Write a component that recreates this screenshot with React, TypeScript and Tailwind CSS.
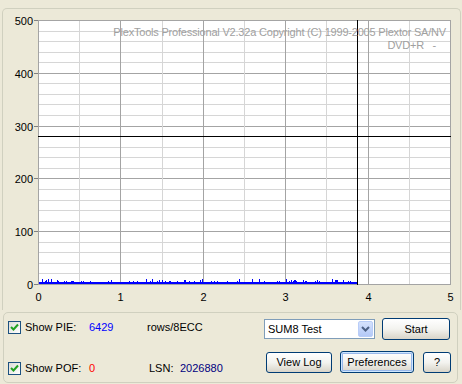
import React from 'react';

const font = { fontFamily: '"Liberation Sans", Arial, sans-serif' };

// chart geometry (page coordinates)
const left = 38;
const right = 450;
const top = 20;
const bottom = 284;
const xAt = (v: number) => Math.round(left + v * 82.4) + 0.5;
const yAt = (v: number) => Math.round(bottom - v * 0.528) + 0.5;

function spikes() {
  let seed = 7;
  const rnd = () => {
    seed = (seed * 1103515245 + 12345) % 2147483648;
    return seed / 2147483648;
  };
  const out: { x: number; h: number }[] = [];
  for (let x = 39; x < 357; x++) {
    const r = rnd();
    if (r > 0.78) out.push({ x, h: r > 0.97 ? 4 : r > 0.9 ? 3 : 2 });
  }
  return out;
}

function Chart() {
  const vLines = Array.from({ length: 11 }, (_, k) => k);
  const hLines = Array.from({ length: 26 }, (_, k) => k * 20);
  return (
    <svg width={457} height={301} viewBox="3 9 457 301" className="block">
      <rect x={left} y={top} width={right - left + 1} height={bottom - top + 1} fill="#ffffff" />
      {hLines.map((v) => (
        <line
          key={'h' + v}
          x1={left}
          x2={right + 1}
          y1={yAt(v)}
          y2={yAt(v)}
          stroke={v % 100 === 0 ? '#a4a4a4' : '#d6d6d6'}
        />
      ))}
      {vLines.map((k) => (
        <line
          key={'v' + k}
          x1={xAt(k / 2)}
          x2={xAt(k / 2)}
          y1={top}
          y2={bottom + 1}
          stroke={k % 2 === 0 ? '#a4a4a4' : '#d6d6d6'}
        />
      ))}
      <rect x={left + 0.5} y={top + 0.5} width={right - left} height={bottom - top} fill="none" stroke="#a4a4a4" />
      {[0, 100, 200, 300, 400, 500].map((v) => (
        <g key={'yl' + v}>
          <line x1={34} x2={left} y1={yAt(v)} y2={yAt(v)} stroke="#808080" />
          <text x={33} y={yAt(v) + 4.5} textAnchor="end" fontSize={11} fill="#000" style={font}>
            {v}
          </text>
        </g>
      ))}
      {[0, 1, 2, 3, 4, 5].map((v) => (
        <text key={'xl' + v} x={xAt(v)} y={301} textAnchor="middle" fontSize={11} fill="#000" style={font}>
          {v}
        </text>
      ))}
      {/* data */}
      <rect x={39} y={282} width={318} height={2} fill="#0000ff" />
      {spikes().map((s) => (
        <rect key={s.x} x={s.x} y={282 - s.h + 1} width={1} height={s.h} fill="#0000ff" />
      ))}
      {/* cursor */}
      <line x1={357.5} x2={357.5} y1={top} y2={bottom + 1} stroke="#000" />
      <line x1={left} x2={right + 1} y1={136.5} y2={136.5} stroke="#000" />
      <text
        x={446}
        y={36}
        textAnchor="end"
        fontSize={11}
        fill="#a0a0a0"
        letterSpacing={-0.2}
        style={font}
      >
        PlexTools Professional V2.32a Copyright (C) 1999-2005 Plextor SA/NV
      </text>
      <text
        x={436}
        y={49}
        textAnchor="end"
        fontSize={11}
        fill="#a0a0a0"
        letterSpacing={-0.2}
        style={{ ...font, whiteSpace: 'pre' }}
        xmlSpace="preserve"
      >
        DVD+R   -
      </text>
    </svg>
  );
}

function Check() {
  return (
    <div className="flex h-[13px] w-[13px] shrink-0 items-center justify-center border border-[#1c5180] bg-gradient-to-br from-[#dcdcd7] to-white">
      <svg width="9" height="9" viewBox="0 0 9 9">
        <path d="M1 4 L3.5 6.5 L8 1.5" fill="none" stroke="#21a121" strokeWidth="2" />
      </svg>
    </div>
  );
}

function XpButton({ label, className, focus }: { label: string; className: string; focus?: boolean }) {
  return (
    <button
      className={`flex items-center justify-center rounded-[3px] border border-[#003c74] bg-gradient-to-b from-white via-[#f3f3ef] to-[#d8d4c8] text-[11px] text-black ${
        focus ? 'shadow-[inset_0_0_0_1px_#cee7ff,inset_0_0_0_2px_#98b8ea]' : ''
      } ${className}`}
      style={font}
    >
      {label}
    </button>
  );
}

export default function App() {
  return (
    <div className="h-[384px] w-[462px] overflow-hidden bg-[#ece9d8] text-[11px] text-black" style={font}>
      <div className="ml-[2px] mt-[8px] h-[302px] w-[459px] rounded-t-[5px] border border-b-0 border-[#d0d0bf]">
        <Chart />
      </div>

      <div className="ml-[3px] mt-[2px] h-[71px] w-[455px] rounded-[5px] border border-[#d0d0bf]">
        <div className="mt-[5px] flex h-[22px] items-center">
          <div className="ml-[4px] mb-[3px] flex items-center">
            <Check />
            <span className="ml-[4px] w-[64px]">Show PIE:</span>
            <span className="w-[58px] text-[#0000ff]">6429</span>
            <span className="w-[117px]">rows/8ECC</span>
          </div>
          <div className="flex h-[20px] w-[111px] items-center justify-between border border-[#7f9db9] bg-white pl-[3px] pr-[1px]">
            <span>SUM8 Test</span>
            <div className="flex h-[16px] w-[15px] items-center justify-center rounded-[2px] border border-[#b9cdf8] bg-gradient-to-b from-[#d5e2fd] to-[#b4c9f7]">
              <svg width="9" height="6" viewBox="0 0 9 6">
                <path d="M1 1 L4.5 4.5 L8 1" fill="none" stroke="#4d6185" strokeWidth="2" />
              </svg>
            </div>
          </div>
          <XpButton label="Start" className="ml-[7px] h-[22px] w-[68px]" />
        </div>

        <div className="mt-[11px] flex h-[22px] items-start">
          <div className="ml-[4px] mt-[9px] flex items-center">
            <Check />
            <span className="ml-[4px] w-[64px]">Show POF:</span>
            <span className="w-[60px] text-[#ff0000]">0</span>
            <span className="w-[31px]">LSN:</span>
            <span className="w-[86px] text-[#000080]">2026880</span>
          </div>
          <XpButton label="View Log" className="mt-[1px] h-[21px] w-[66px]" />
          <XpButton label="Preferences" className="ml-[8px] h-[22px] w-[74px]" focus />
          <XpButton label="?" className="ml-[9px] mt-[1px] h-[21px] w-[28px]" />
        </div>
      </div>
    </div>
  );
}
